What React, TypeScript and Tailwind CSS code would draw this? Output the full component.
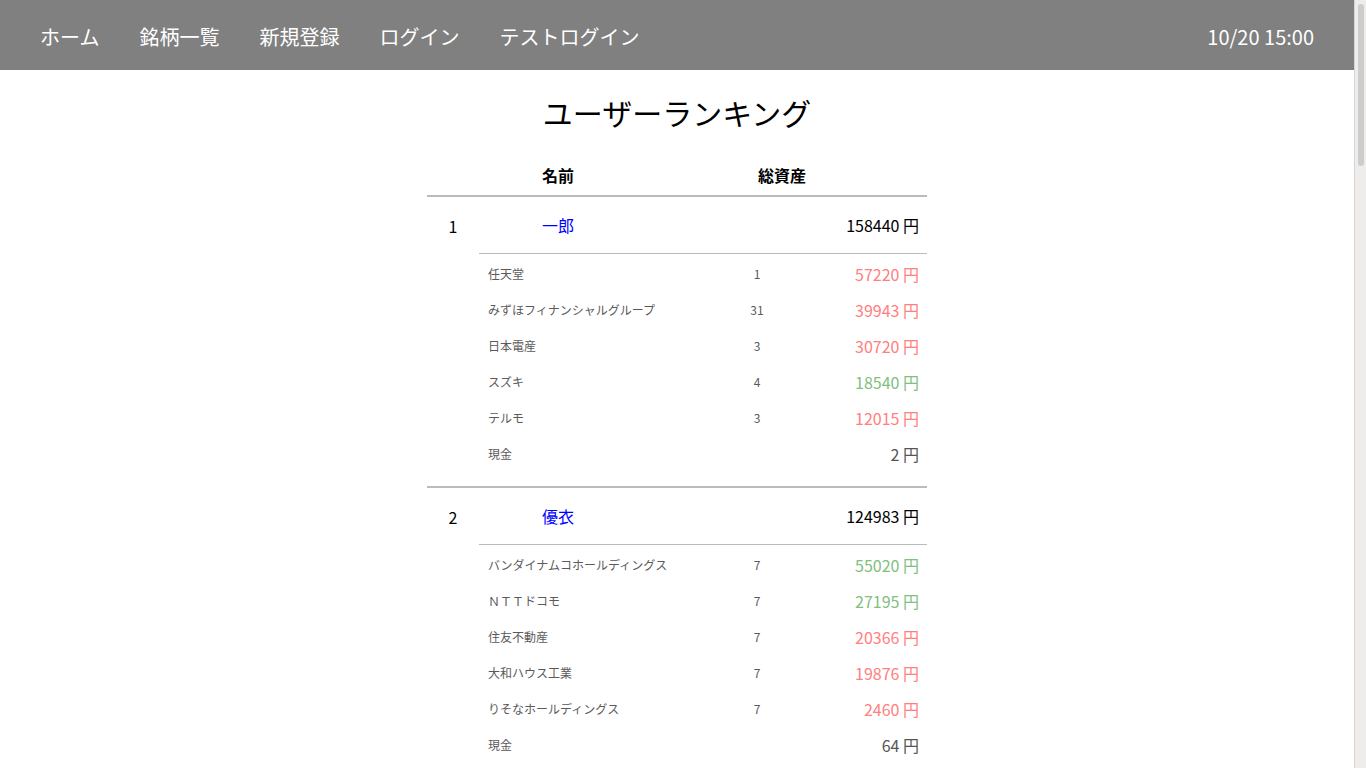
const font = { fontFamily: '"Noto Sans CJK JP", "Noto Sans", sans-serif' };

type Holding = { name: string; qty?: number; value: number; up?: boolean };
type User = { rank: number; name: string; total: number; holdings: Holding[] };

const users: User[] = [
  {
    rank: 1,
    name: "一郎",
    total: 158440,
    holdings: [
      { name: "任天堂", qty: 1, value: 57220, up: false },
      { name: "みずほフィナンシャルグループ", qty: 31, value: 39943, up: false },
      { name: "日本電産", qty: 3, value: 30720, up: false },
      { name: "スズキ", qty: 4, value: 18540, up: true },
      { name: "テルモ", qty: 3, value: 12015, up: false },
      { name: "現金", value: 2 },
    ],
  },
  {
    rank: 2,
    name: "優衣",
    total: 124983,
    holdings: [
      { name: "バンダイナムコホールディングス", qty: 7, value: 55020, up: true },
      { name: "ＮＴＴドコモ", qty: 7, value: 27195, up: true },
      { name: "住友不動産", qty: 7, value: 20366, up: false },
      { name: "大和ハウス工業", qty: 7, value: 19876, up: false },
      { name: "りそなホールディングス", qty: 7, value: 2460, up: false },
      { name: "現金", value: 64 },
    ],
  },
  {
    rank: 3,
    name: "健太",
    total: 103512,
    holdings: [
      { name: "トヨタ自動車", qty: 5, value: 36250, up: true },
      { name: "ソフトバンクグループ", qty: 4, value: 28840, up: false },
      { name: "キヤノン", qty: 6, value: 21078, up: true },
      { name: "現金", value: 17344 },
    ],
  },
];

function valueColor(h: Holding) {
  if (h.up === undefined) return "text-[#555555]";
  return h.up ? "text-[#80c080]" : "text-[#ff8080]";
}

export default function App() {
  return (
    <div style={font} className="flex h-screen overflow-hidden bg-white text-black">
      <div className="flex-1 min-w-0">
        {/* Header */}
        <header className="h-[70px] bg-[#808080] flex items-center justify-between pl-10 pr-10 pt-[3px] text-white text-[20px]">
          <nav className="flex gap-10">
            <a>ホーム</a>
            <a>銘柄一覧</a>
            <a>新規登録</a>
            <a>ログイン</a>
            <a>テストログイン</a>
          </nav>
          <div>10/20 15:00</div>
        </header>

        <main className="flex flex-col items-center pb-10">
          <h1 className="text-[30px] leading-[48px] mt-[18px]">ユーザーランキング</h1>

          <div className="w-[500px] mt-[20px]">
            <div className="flex border-b-2 border-[#bbbbbb] font-bold text-[16px] h-[41px] items-center pb-[2px]">
              <div className="w-[52px]" />
              <div className="w-[158px] text-center">名前</div>
              <div className="flex-1 text-center">総資産</div>
            </div>

            {users.map((u) => (
              <div key={u.rank} className="flex border-b-2 border-[#bbbbbb]">
                <div className="w-[52px] text-center text-[16px] pt-[17px]">{u.rank}</div>
                <div className="flex-1">
                  <div className="flex h-[57px] items-center border-b border-[#bbbbbb] text-[16px]">
                    <div className="w-[158px] text-center text-[#0000ff]">{u.name}</div>
                    <div className="flex-1 text-right pr-2">{u.total} 円</div>
                  </div>
                  <div className="pt-[2px] pb-[14px]">
                    {u.holdings.map((h, i) => (
                      <div key={i} className="grid grid-cols-[248px_60px_1fr] h-[36px] items-center">
                        <div className="pl-[9px] text-[12px] text-[#5a5a5a]">{h.name}</div>
                        <div className="text-center text-[12px] text-[#5a5a5a]">{h.qty ?? ""}</div>
                        <div className={`text-right pr-2 text-[16px] ${valueColor(h)}`}>{h.value} 円</div>
                      </div>
                    ))}
                  </div>
                </div>
              </div>
            ))}
          </div>
        </main>
      </div>

      {/* scrollbar */}
      <div className="w-[12px] shrink-0 bg-[#efedeb] border-l border-[#d8d4d0] pt-[4px]">
        <div className="mx-auto w-[6px] h-[162px] rounded-full bg-[#cdcdcd]" />
      </div>
    </div>
  );
}
